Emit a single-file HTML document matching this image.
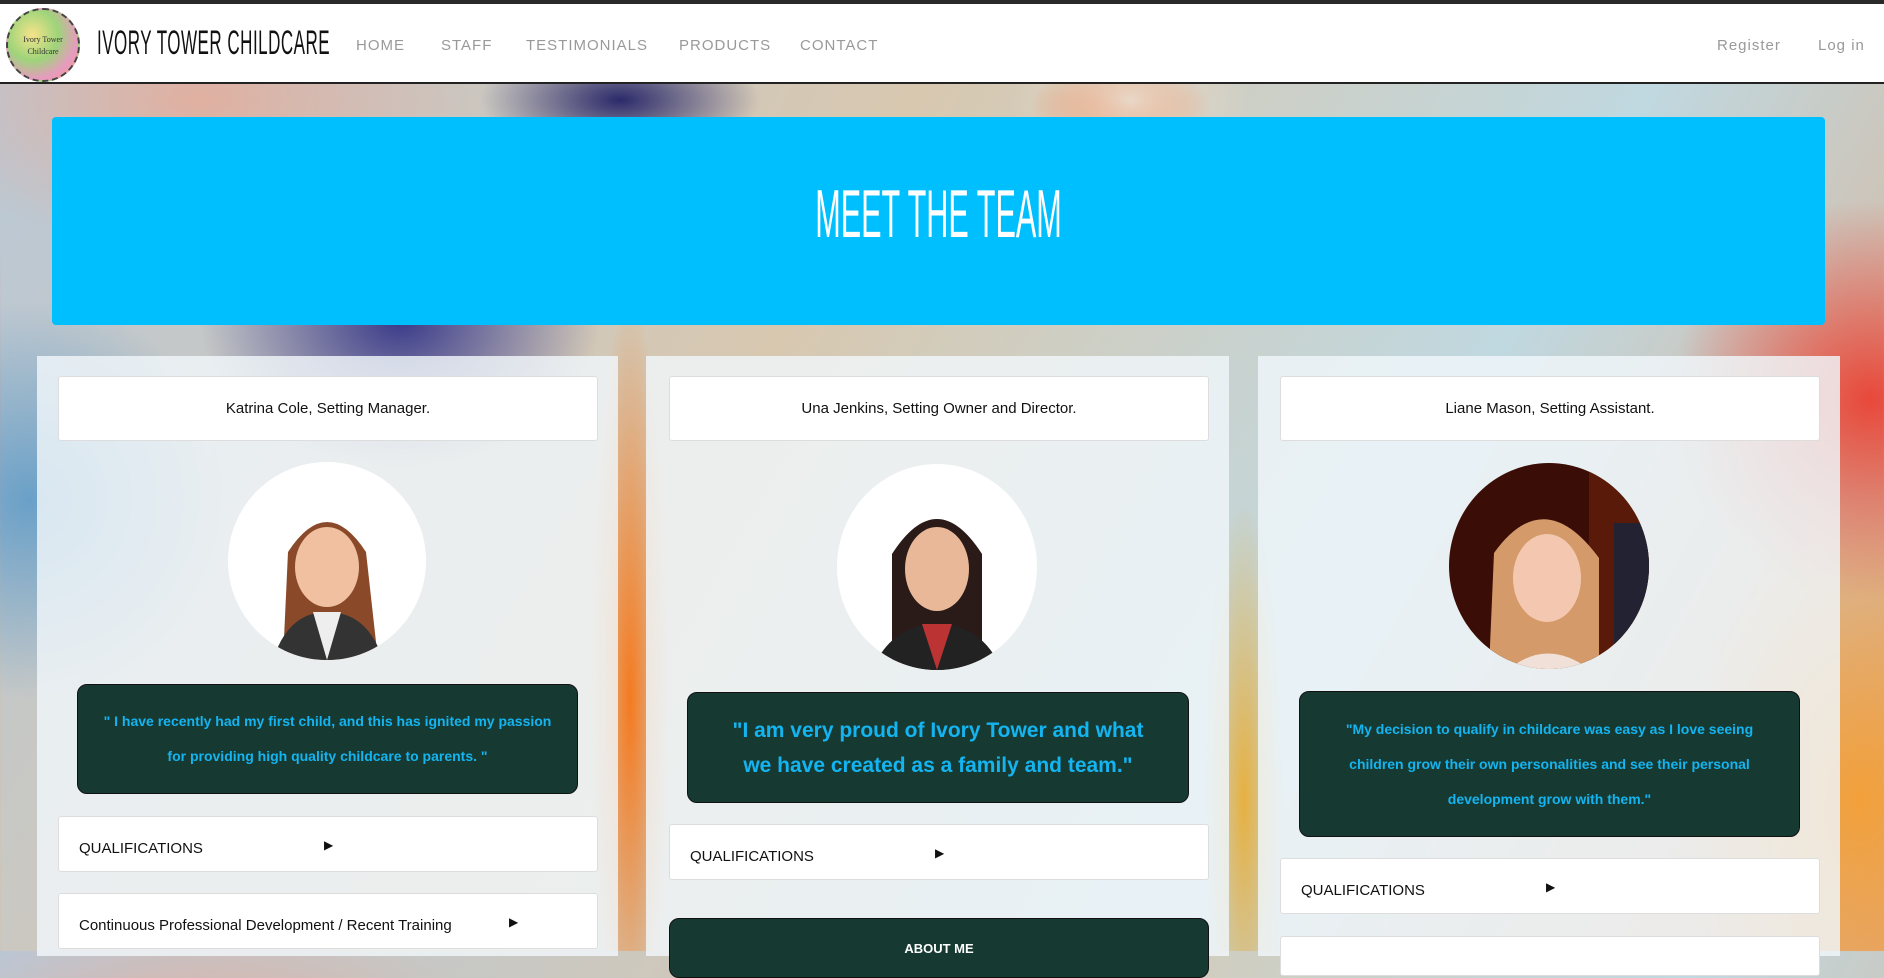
<!DOCTYPE html>
<html><head><meta charset="utf-8"><style>
*{box-sizing:border-box;margin:0;padding:0}
body{width:1884px;height:951px;overflow:hidden;position:relative;font-family:"Liberation Sans",sans-serif;
background:
radial-gradient(ellipse 140px 60px at 620px 100px,#2b2a6a,transparent),
radial-gradient(ellipse 120px 80px at 1130px 100px,#e8d8c8,transparent),
radial-gradient(ellipse 90px 40px at 1120px 105px,#f26a2a,transparent),
radial-gradient(ellipse 200px 200px at 1870px 400px,#e8483a,transparent),
radial-gradient(ellipse 180px 300px at 1860px 800px,#f2a03a,transparent),
radial-gradient(ellipse 40px 400px at 630px 700px,#f47a20,transparent),
radial-gradient(ellipse 40px 300px at 1244px 800px,#e7b040,transparent),
radial-gradient(ellipse 200px 150px at 400px 320px,#3a3a8a,transparent),
radial-gradient(ellipse 200px 200px at 30px 500px,#6aa0c8,transparent),
radial-gradient(ellipse 300px 150px at 200px 100px,#e0b0a0,transparent),
linear-gradient(120deg,#b8c8d8,#d8c8b0 40%,#c0d8e0 70%,#e0a880);}
.top{position:absolute;left:0;top:0;width:1884px;height:4px;background:#2a2a2a}
header{position:absolute;left:0;top:4px;width:1884px;height:80px;background:#fff;border-bottom:2px solid #222}
.logo{position:absolute;left:6px;top:4px;width:74px;height:74px;border-radius:50%;border:2px dashed #444;
background:radial-gradient(circle at 35% 35%,#f4e38a,#9ed47a 40%,#e89ac0 70%,#f0a060);font-size:8px;text-align:center;padding-top:24px;line-height:12px;color:#333;font-family:"Liberation Serif",serif}
.brand{position:absolute;left:97px;top:20px;font-size:34px;color:#111;transform:scaleX(0.5);transform-origin:left;white-space:nowrap;letter-spacing:1px}
nav a{position:absolute;top:33px;font-size:15px;color:#999;letter-spacing:1px;text-decoration:none}
.banner{position:absolute;left:52px;top:117px;width:1773px;height:208px;background:#00bfff;border-radius:4px}
.banner h1{position:absolute;left:0;right:0;top:62px;text-align:center;color:#fff;font-weight:normal;font-size:68px;line-height:70px;transform:scaleX(0.45)}
.col{position:absolute;top:356px;height:600px;background:rgba(240,246,250,0.82)}
.box{position:absolute;background:#fff;border:1px solid #ddd;border-radius:3px}
.name{height:65px;font-size:15px;text-align:center;line-height:63px;color:#111}
.q{position:absolute;background:#163a32;border:1px solid #111;border-radius:10px;color:#14b4f0;text-align:center;font-weight:bold;display:flex;align-items:center;justify-content:center}
.acc{height:56px;font-size:15px;color:#111;padding-left:20px;line-height:64px}
.acc span{position:absolute;top:0;font-size:12px;line-height:56px}
.ph{position:absolute;border-radius:50%;overflow:hidden}
</style></head><body>
<div class="top"></div>
<header>
<div class="logo">Ivory Tower<br>Childcare</div>
<div class="brand">IVORY TOWER CHILDCARE</div>
<nav><a style="left:356px">HOME</a><a style="left:441px">STAFF</a><a style="left:526px">TESTIMONIALS</a><a style="left:679px">PRODUCTS</a><a style="left:800px">CONTACT</a><a style="left:1717px">Register</a><a style="left:1818px">Log in</a></nav>
</header>
<div class="banner"><h1>MEET THE TEAM</h1></div>

<div class="col" style="left:37px;width:581px"></div>
<div class="col" style="left:646px;width:583px"></div>
<div class="col" style="left:1258px;width:582px"></div>

<div class="box name" style="left:58px;top:376px;width:540px">Katrina Cole, Setting Manager.</div>
<div class="box name" style="left:669px;top:376px;width:540px">Una Jenkins, Setting Owner and Director.</div>
<div class="box name" style="left:1280px;top:376px;width:540px">Liane Mason, Setting Assistant.</div>

<div class="ph" style="left:228px;top:462px;width:198px;height:198px;background:#fff">
<svg width="198" height="198"><path d="M55 198 L60 90 Q99 30 138 90 L150 198Z" fill="#8a4a2a"/><ellipse cx="99" cy="105" rx="32" ry="40" fill="#f0c0a0"/><path d="M45 198 Q60 150 99 150 Q140 150 155 198Z" fill="#333"/><path d="M85 150 L99 198 L113 150Z" fill="#eee"/></svg></div>
<div class="ph" style="left:837px;top:464px;width:200px;height:206px;background:#fff">
<svg width="200" height="206"><path d="M55 206 L55 90 Q100 20 145 90 L145 206Z" fill="#2a1a18"/><ellipse cx="100" cy="105" rx="32" ry="42" fill="#e8b898"/><path d="M35 206 Q55 160 100 160 Q145 160 165 206Z" fill="#222"/><path d="M85 160 L100 206 L115 160Z" fill="#b33"/></svg></div>
<div class="ph" style="left:1449px;top:463px;width:200px;height:206px;background:#3a0e06">
<svg width="200" height="206"><rect x="140" y="0" width="60" height="206" fill="#5a1a0a"/><path d="M165 60 L200 60 L200 206 L165 206Z" fill="#223" /><path d="M40 206 L45 90 Q95 20 150 95 L150 206Z" fill="#d49a6a"/><ellipse cx="98" cy="115" rx="34" ry="44" fill="#f4c8b0"/><path d="M60 206 Q98 175 140 206Z" fill="#f0e0d8"/></svg></div>

<div class="q" style="left:77px;top:684px;width:501px;height:110px;font-size:14px;line-height:35px">" I have recently had my first child, and this has ignited my passion<br>for providing high quality childcare to parents. "</div>
<div class="q" style="left:687px;top:692px;width:502px;height:111px;font-size:21px;line-height:35px">"I am very proud of Ivory Tower and what<br>we have created as a family and team."</div>
<div class="q" style="left:1299px;top:691px;width:501px;height:146px;font-size:14px;line-height:35px">"My decision to qualify in childcare was easy as I love seeing<br>children grow their own personalities and see their personal<br>development grow with them."</div>

<div class="box acc" style="left:58px;top:816px;width:540px">QUALIFICATIONS<span style="left:265px">&#9654;</span></div>
<div class="box acc" style="left:58px;top:893px;width:540px">Continuous Professional Development / Recent Training<span style="left:450px">&#9654;</span></div>
<div class="box acc" style="left:669px;top:824px;width:540px">QUALIFICATIONS<span style="left:265px">&#9654;</span></div>
<div class="q" style="left:669px;top:918px;width:540px;height:60px;font-size:13px;align-items:flex-start;padding-top:22px;color:#fff">ABOUT ME</div>
<div class="box acc" style="left:1280px;top:858px;width:540px">QUALIFICATIONS<span style="left:265px">&#9654;</span></div>
<div class="box" style="left:1280px;top:936px;width:540px;height:40px"></div>
</body></html>
